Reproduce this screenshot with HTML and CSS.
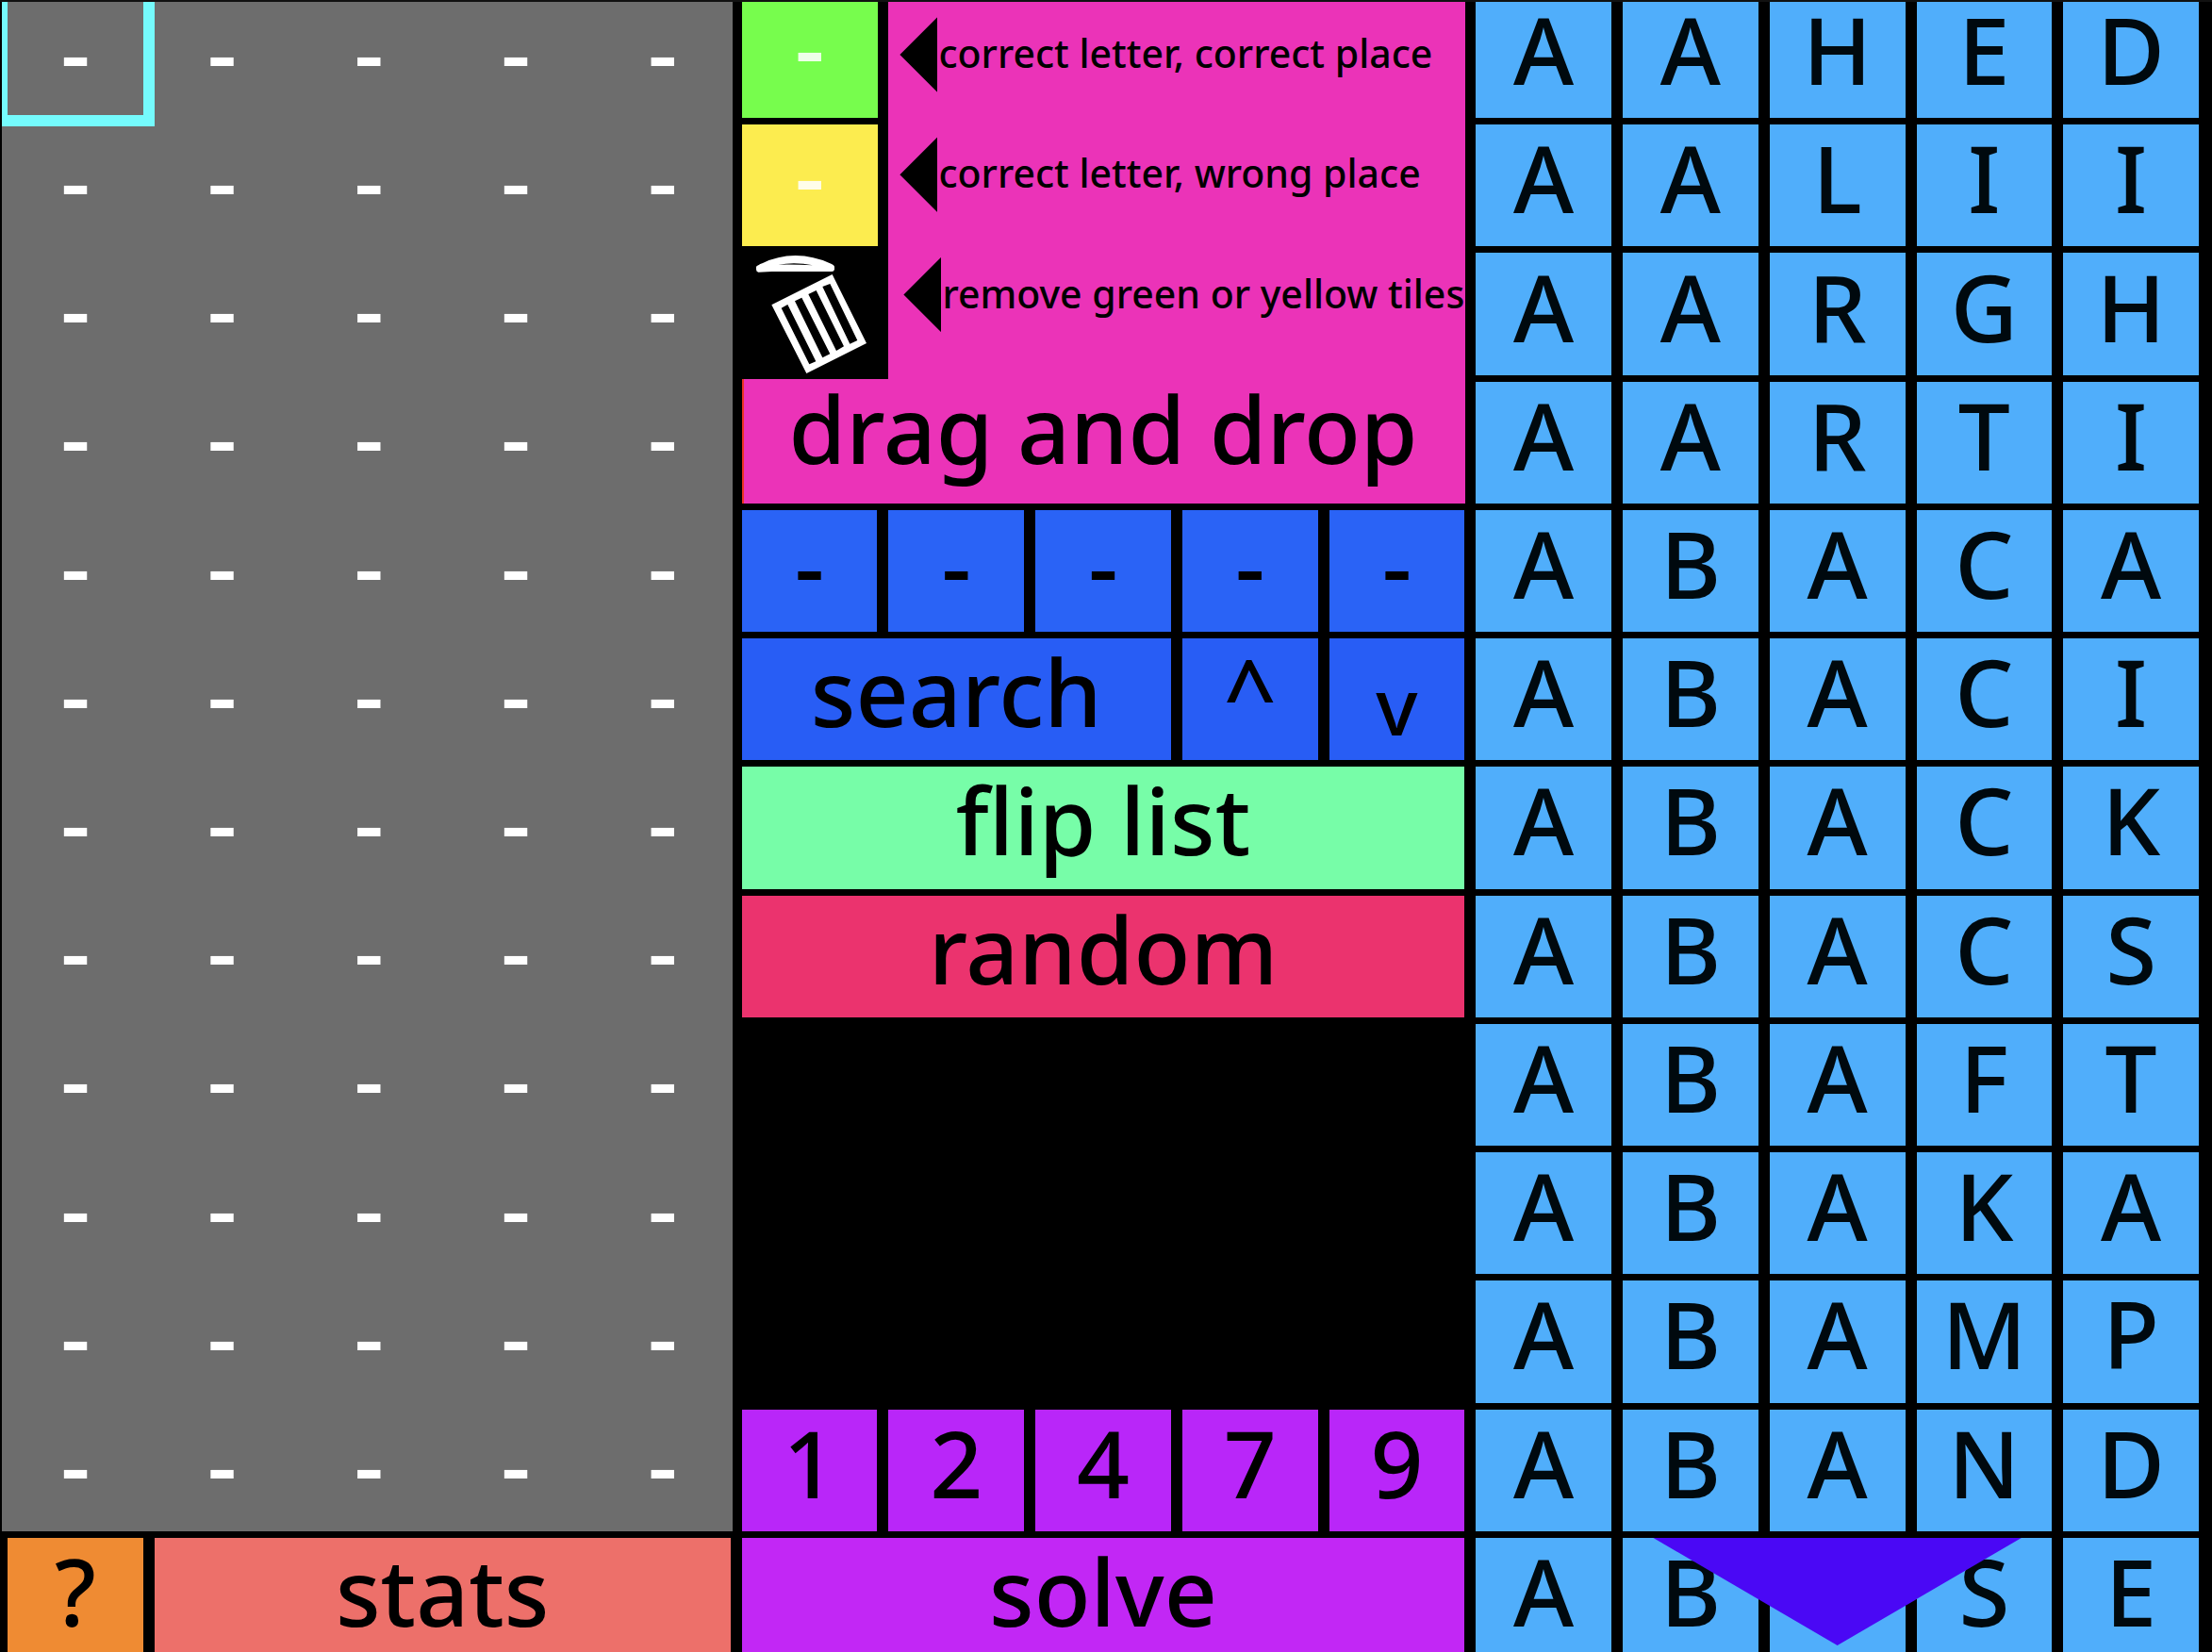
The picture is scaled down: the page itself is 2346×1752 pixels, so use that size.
FILE: index.html
```html
<!DOCTYPE html>
<html lang="en">
<head>
<meta charset="utf-8">
<title>Word solver</title>
<link rel="stylesheet" href="styles.css">
</head>
<body>
<div class="app">
<main class="board">

  <section class="guesses">
    <button class="tile selected">-</button><button class="tile">-</button><button class="tile">-</button><button class="tile">-</button><button class="tile">-</button>
    <button class="tile">-</button><button class="tile">-</button><button class="tile">-</button><button class="tile">-</button><button class="tile">-</button>
    <button class="tile">-</button><button class="tile">-</button><button class="tile">-</button><button class="tile">-</button><button class="tile">-</button>
    <button class="tile">-</button><button class="tile">-</button><button class="tile">-</button><button class="tile">-</button><button class="tile">-</button>
    <button class="tile">-</button><button class="tile">-</button><button class="tile">-</button><button class="tile">-</button><button class="tile">-</button>
    <button class="tile">-</button><button class="tile">-</button><button class="tile">-</button><button class="tile">-</button><button class="tile">-</button>
    <button class="tile">-</button><button class="tile">-</button><button class="tile">-</button><button class="tile">-</button><button class="tile">-</button>
    <button class="tile">-</button><button class="tile">-</button><button class="tile">-</button><button class="tile">-</button><button class="tile">-</button>
    <button class="tile">-</button><button class="tile">-</button><button class="tile">-</button><button class="tile">-</button><button class="tile">-</button>
    <button class="tile">-</button><button class="tile">-</button><button class="tile">-</button><button class="tile">-</button><button class="tile">-</button>
    <button class="tile">-</button><button class="tile">-</button><button class="tile">-</button><button class="tile">-</button><button class="tile">-</button>
    <button class="tile">-</button><button class="tile">-</button><button class="tile">-</button><button class="tile">-</button><button class="tile">-</button>
  </section>

  <nav class="footer">
    <button class="tile help">?</button>
    <button class="tile stats">stats</button>
  </nav>

  <section class="legend">
    <div class="samples">
      <button class="tile sample green">-</button>
      <button class="tile sample yellow">-</button>
      <button class="trash" aria-label="trash">
        <svg viewBox="18 54 468 399" width="156" height="133" fill="#fff">
          <path fill-rule="evenodd" d="M63 99Q66 94 84 87Q130 64 188 63Q246 64 296 87Q312 93 312 99V107Q311 114 303 114H113L70 116Q63 114 63 107ZM133 92Q188 82 243 94Q188 91 133 92Z"/>
          <path fill-rule="evenodd" d="M112 220L305 123L414 342L223 438ZM143 230L232 409L253 400L163 219ZM186 208L274 388L298 376L208 197ZM229 186L318 366L342 352L254 174ZM274 162L361 344L385 333L298 153Z"/>
        </svg>
      </button>
    </div>
    <div class="notes">
      <p class="note"><span class="pointer"></span><span class="caption">correct letter, correct place</span></p>
      <p class="note"><span class="pointer"></span><span class="caption">correct letter, wrong place</span></p>
      <p class="note note-last"><span class="pointer"></span><span class="caption">remove green or yellow tiles</span></p>
    </div>
    <h1 class="headline">drag and drop</h1>
  </section>

  <section class="controls">
    <button class="tile letter">-</button>
    <button class="tile letter">-</button>
    <button class="tile letter">-</button>
    <button class="tile letter">-</button>
    <button class="tile letter">-</button>
    <button class="tile find search">search</button>
    <button class="tile find">^</button>
    <button class="tile find down">v</button>
    <button class="tile wide flip">flip list</button>
    <button class="tile wide random">random</button>
  </section>

  <section class="solver">
    <button class="tile number">1</button>
    <button class="tile number">2</button>
    <button class="tile number">4</button>
    <button class="tile number">7</button>
    <button class="tile number">9</button>
    <button class="tile wide solve">solve</button>
  </section>

  <section class="words">
    <span class="tile">A</span><span class="tile">A</span><span class="tile">H</span><span class="tile">E</span><span class="tile">D</span>
    <span class="tile">A</span><span class="tile">A</span><span class="tile">L</span><span class="tile">I</span><span class="tile">I</span>
    <span class="tile">A</span><span class="tile">A</span><span class="tile">R</span><span class="tile">G</span><span class="tile">H</span>
    <span class="tile">A</span><span class="tile">A</span><span class="tile">R</span><span class="tile">T</span><span class="tile">I</span>
    <span class="tile">A</span><span class="tile">B</span><span class="tile">A</span><span class="tile">C</span><span class="tile">A</span>
    <span class="tile">A</span><span class="tile">B</span><span class="tile">A</span><span class="tile">C</span><span class="tile">I</span>
    <span class="tile">A</span><span class="tile">B</span><span class="tile">A</span><span class="tile">C</span><span class="tile">K</span>
    <span class="tile">A</span><span class="tile">B</span><span class="tile">A</span><span class="tile">C</span><span class="tile">S</span>
    <span class="tile">A</span><span class="tile">B</span><span class="tile">A</span><span class="tile">F</span><span class="tile">T</span>
    <span class="tile">A</span><span class="tile">B</span><span class="tile">A</span><span class="tile">K</span><span class="tile">A</span>
    <span class="tile">A</span><span class="tile">B</span><span class="tile">A</span><span class="tile">M</span><span class="tile">P</span>
    <span class="tile">A</span><span class="tile">B</span><span class="tile">A</span><span class="tile">N</span><span class="tile">D</span>
    <span class="tile">A</span><span class="tile">B</span><span class="tile">A</span><span class="tile">S</span><span class="tile">E</span>
  </section>
  <button class="scroll-down" aria-label="scroll down"></button>

</main>
</div>
</body>
</html>
```

FILE: styles.css
```css
* {
  box-sizing: border-box;
}

body {
  margin: 0;
  background: #000;
  color: #000;
  font-family: "Noto Sans", sans-serif;
  font-weight: 500;
}

button {
  border: 0;
  border-radius: 0;
  padding: 0;
  background: none;
  color: inherit;
  font: inherit;
}

.app {
  height: 100vh;
  overflow: hidden;
  border-top: 2px solid #111;
}

/* 15 columns by 13 rows; the first and last rows run past the window */
.board {
  display: grid;
  grid-template-columns: repeat(15, minmax(0, 1fr));
  grid-template-rows: repeat(13, minmax(0, 1fr));
  gap: 7px 12px;
  height: calc(100vh + 12px);
  margin-top: -6px;
  padding: 0 14px 0 8px;
}

.guesses,
.footer,
.legend,
.controls,
.solver,
.words {
  display: grid;
  grid-template-columns: subgrid;
  grid-template-rows: subgrid;
}

.tile {
  display: flex;
  align-items: center;
  justify-content: center;
  padding-bottom: 17px;
  font-size: 98px;
  line-height: 112px;
  white-space: nowrap;
}

.guesses {
  grid-area: 1 / 1 / 13 / 6;
  margin: 0 -2px 0 -6px;
  padding: 0 2px 0 6px;
  overflow: hidden;
  background: #6d6d6d;
  color: #fff;
}

.guesses .tile,
.letter {
  padding-bottom: 14px;
}

.selected {
  box-shadow: inset 0 -3px #75fbfd, 0 -3px 0 12px #75fbfd;
}

.footer {
  grid-area: 13 / 1 / 14 / 6;
}

.help {
  background: #ef8b33;
}

.stats {
  grid-column: 2 / 6;
  background: #ed706a;
}

.legend {
  grid-area: 1 / 6 / 5 / 11;
  margin-right: -1px;
  padding-right: 1px;
  background: #eb33b8;
  box-shadow: inset 2px 0 #eb3323;
}

.samples {
  grid-area: 1 / 1 / 4 / 2;
  display: grid;
  grid-template-rows: subgrid;
  margin: 0 -12px -4px 0;
  background: #000;
}

.sample {
  margin-right: 12px;
  padding-bottom: 23px;
  color: rgba(255, 255, 255, 0.88);
}

.green {
  background: #77fd4d;
}

.yellow {
  background: #fcec4f;
}

.trash {
  display: flex;
}

.notes {
  grid-area: 1 / 2 / 4 / 6;
  display: flex;
  flex-direction: column;
  gap: 3px;
  padding: 0 0 23px 12px;
}

.note {
  display: flex;
  flex: 1;
  align-items: center;
  gap: 1px;
  margin: 0;
  font-size: 41px;
  line-height: 56px;
  white-space: nowrap;
}

.note-last {
  padding-left: 4px;
}

.caption {
  padding-bottom: 4px;
}

.pointer {
  width: 40px;
  height: 80px;
  background: #000;
  clip-path: polygon(0 50%, 100% 0, 100% 100%);
}

.headline {
  grid-area: 4 / 1 / 5 / 6;
  margin: 0;
  font-size: 98px;
  font-weight: 500;
  line-height: 98px;
  text-align: center;
}

.controls {
  grid-area: 5 / 6 / 9 / 11;
}

.letter {
  background: #2a63f6;
}

.find {
  background: #285df5;
}

.search {
  grid-column: 1 / 4;
}

.down {
  padding: 12px 0 0;
  font-size: 84px;
}

.wide {
  grid-column: 1 / 6;
}

.flip {
  background: #77fda8;
}

.random {
  background: #eb336e;
}

.solver {
  grid-area: 12 / 6 / 14 / 11;
}

.number {
  background: #b926f9;
}

.solve {
  background: #c227f5;
}

.words {
  grid-area: 1 / 11 / 14 / 16;
  color: #00090e;
}

.words .tile {
  background: #50aefb;
}

.scroll-down {
  grid-area: 13 / 12 / 14 / 15;
  z-index: 1;
  margin: 0 32px 15px;
  background: #4a08f5;
  clip-path: polygon(0 0, 100% 0, 50% 100%);
}
```
